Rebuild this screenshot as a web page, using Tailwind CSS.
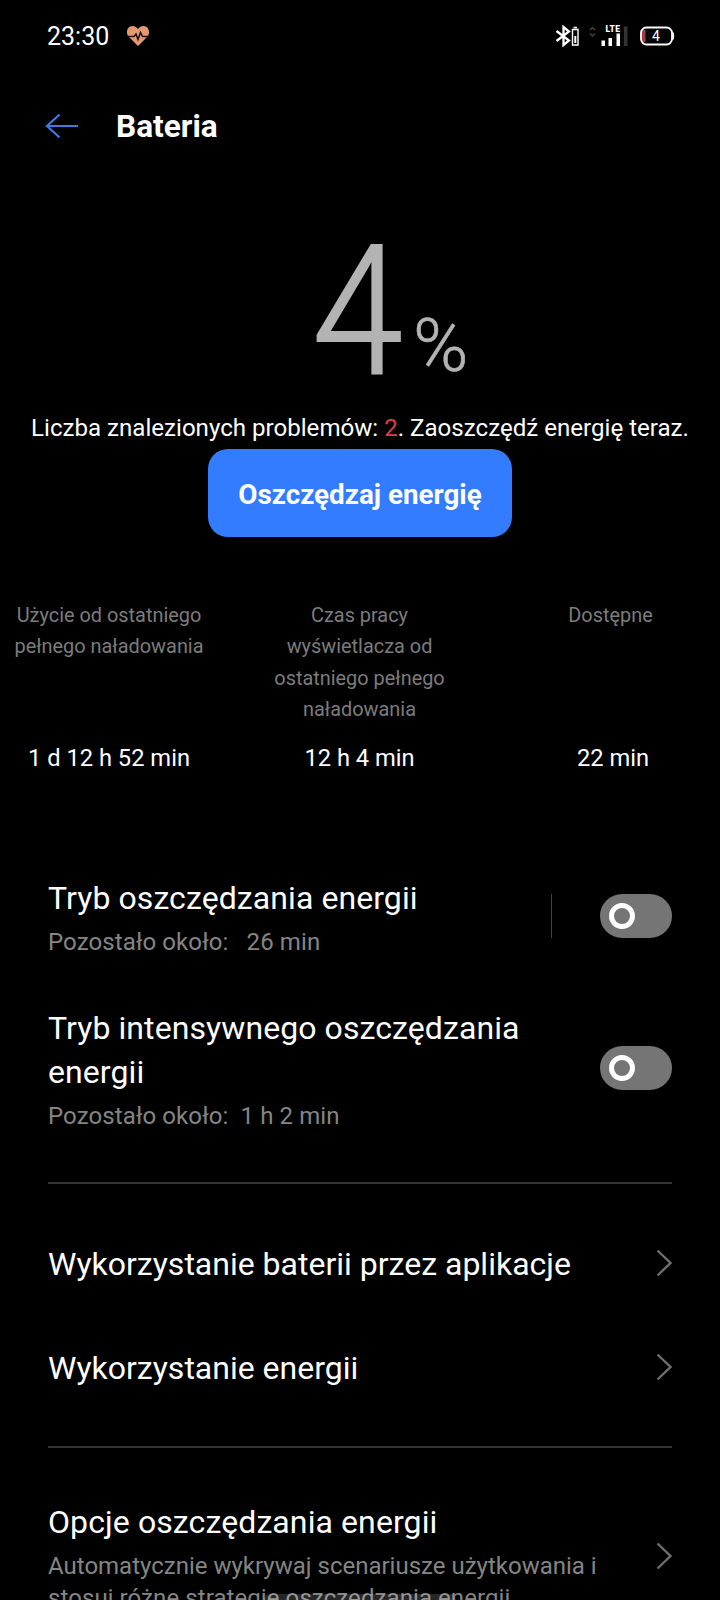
<!DOCTYPE html>
<html lang="pl">
<head>
    <meta charset="UTF-8">
    <title>Bateria</title>
    <script src="https://cdn.jsdelivr.net/npm/@tailwindcss/browser@4"></script>
</head>
<body class="bg-black text-white font-['Roboto',sans-serif]">
    <div class="relative w-[720px] h-[1600px] overflow-hidden">
        <!-- Status bar -->
        <header class="flex items-center h-[72px] pl-[47px] pr-[45px]">
            <span class="w-[79px] pt-[2px] text-[25px] leading-8">23:30</span>
            <svg class="w-[24px] h-[22px]" viewBox="0 0 24 22">
                <path d="M12 21 2.500 11.500C-1 7 2 1 6.500 1 9 1 11 2.500 12 4c1-1.500 3-3 5.500-3C22 1 25 7 21.500 11.500Z" fill="#e39a73"/>
                <path d="M0 11.500h8l2-2.500 2 5.500 2.500-7 2 4H24" fill="none" stroke="#1a0d08" stroke-width="1.500"/>
            </svg>
            <div class="ml-auto flex items-center">
                <svg class="w-[26px] h-[22px]" viewBox="0 0 26 22" fill="none" stroke="#fff">
                    <path d="m1.500 6 12.500 9.500L8.500 20V2L14 6.500 1.500 16" stroke-width="2.300"/>
                    <path d="M17.500 4.500h5.500v15.500h-5.500zM18.500 2.500h3.500" stroke-width="1.400"/>
                    <path d="M20.300 11v7" stroke-width="2"/>
                </svg>
                <svg class="ml-[8px] w-[7px] h-[22px]" viewBox="0 0 7 22" fill="none" stroke="#444" stroke-width="1.500">
                    <path d="m1 5 2.500-2.500L6 5M1 8.500l2.500 2.500L6 8.500"/>
                </svg>
                <svg class="ml-[5px] w-[27px] h-[22px]" viewBox="0 0 27 22">
                    <text x="4.500" y="7" font-family="Roboto" font-size="8.500" font-weight="900" textLength="14.500" fill="#fff">LTE</text>
                    <path d="M.5 15.500H4V21H.5zM7.500 13H11v8H7.500zM15.500 8.500h3.500V21h-3.500z" fill="#fff"/>
                    <path d="M23 1.500h3.500V21H23z" fill="#333"/>
                </svg>
                <svg class="ml-[12px] w-[35px] h-[20px]" viewBox="0 0 35 20">
                    <path d="M2 4h3.500v12H2z" fill="#a63a44"/>
                    <rect x="1" y="1.500" width="31" height="17" rx="5.500" fill="none" stroke="#fff" stroke-width="1.800"/>
                    <path d="M33 6.500q1.500 3.500 0 7z" fill="#fff" stroke="#fff"/>
                    <text x="16" y="14.800" font-family="Roboto" font-size="14" text-anchor="middle" fill="#fff">4</text>
                </svg>
            </div>
        </header>

        <!-- Title bar -->
        <div class="flex items-center h-[108px] pl-[45px]">
            <svg class="w-[34px] h-[26px]" viewBox="0 0 34 26" fill="none" stroke="#3a7bea" stroke-width="2.200">
                <path d="M14.500 1.500 2 13l12.500 11.500M2 13h31"/>
            </svg>
            <h1 class="ml-[37px] pt-[2px] text-[31.600px] leading-10 font-bold">Bateria</h1>
        </div>

        <!-- Charge level -->
        <div class="flex items-baseline h-[232px] pl-[312px] text-[#b3b3b3] font-light">
            <span class="w-[101px] text-[180px] leading-[264px] origin-left scale-x-[0.91] [-webkit-text-stroke:1.8px_#b3b3b3]">4</span>
            <span class="text-[75px] leading-none -translate-y-[2px] [-webkit-text-stroke:0.6px_#b3b3b3]">%</span>
        </div>

        <p class="text-center text-[24.1px] leading-[32px] whitespace-nowrap">Liczba znalezionych problemów: <span class="text-[#d6404f]">2</span>. Zaoszczędź energię teraz.</p>
        <button class="block mx-auto mt-[5px] w-[304px] h-[88px] pt-[3px] rounded-[20px] bg-[#337cff] text-[27.8px] font-bold whitespace-nowrap">Oszczędzaj energię</button>

        <!-- Usage stats -->
        <div class="mt-[63px] flex justify-between h-[174px] text-center">
            <div class="w-[218px] flex flex-col justify-between">
                <p class="text-[19.9px] leading-[31.4px] text-[#7c7c7c]">Użycie od ostatniego<br>pełnego naładowania</p>
                <p class="text-[23.7px] leading-8">1 d 12 h 52 min</p>
            </div>
            <div class="w-[218px] pr-[1px] flex flex-col justify-between">
                <p class="text-[19.9px] leading-[31.4px] text-[#7c7c7c]">Czas pracy<br>wyświetlacza od<br>ostatniego pełnego<br>naładowania</p>
                <p class="text-[23.7px] leading-8">12 h 4 min</p>
            </div>
            <div class="w-[218px] pr-[1px] flex flex-col justify-between">
                <p class="text-[19.9px] leading-[31.4px] text-[#7c7c7c]">Dostępne</p>
                <p class="pl-[5px] text-[23.7px] leading-8">22 min</p>
            </div>
        </div>

        <!-- Power modes -->
        <section class="mx-[48px] pt-[102px] pb-[50px] border-b-2 border-[#333]">
            <div class="flex items-center">
                <div class="flex-1">
                    <h2 class="text-[32px] leading-[44px] tracking-[0.08px]">Tryb oszczędzania energii</h2>
                    <p class="mt-[6px] text-[24px] leading-8 tracking-[0.1px] text-[#858585] whitespace-pre">Pozostało około:   26 min</p>
                </div>
                <div class="w-px h-[44px] mb-[3px] mr-[48px] bg-[#404040]"></div>
                <div class="flex items-center w-[72px] h-[44px] mb-[3px] pl-[9px] rounded-full bg-[#757575]">
                    <div class="size-[26px] rounded-full border-5 border-white"></div>
                </div>
            </div>
            <div class="mt-[49px] flex items-center">
                <div class="flex-1">
                    <h2 class="text-[32px] leading-[43.5px] tracking-[0.08px]">Tryb intensywnego oszczędzania<br>energii</h2>
                    <p class="mt-[6px] text-[24px] leading-8 tracking-[0.1px] text-[#858585] whitespace-pre">Pozostało około:  1 h 2 min</p>
                </div>
                <div class="flex items-center w-[72px] h-[44px] mb-[4px] pl-[9px] rounded-full bg-[#757575]">
                    <div class="size-[26px] rounded-full border-5 border-white"></div>
                </div>
            </div>
        </section>

        <!-- Usage links -->
        <section class="mx-[48px] pt-[58px] pb-[56px] border-b-2 border-[#333]">
            <div class="flex items-center justify-between">
                <h2 class="text-[32px] leading-[44px]">Wykorzystanie baterii przez aplikacje</h2>
                <svg class="w-[16px] h-[28px] mb-[2px]" viewBox="0 0 16 28" fill="none" stroke="#6e6e6e" stroke-width="2.400"><path d="m1.500 1.500 13 12.500-13 12.500"/></svg>
            </div>
            <div class="mt-[60px] flex items-center justify-between">
                <h2 class="text-[32px] leading-[44px]">Wykorzystanie energii</h2>
                <svg class="w-[16px] h-[28px] mb-[2px]" viewBox="0 0 16 28" fill="none" stroke="#6e6e6e" stroke-width="2.400"><path d="m1.500 1.500 13 12.500-13 12.500"/></svg>
            </div>
        </section>

        <section class="mx-[48px] pt-[52px] flex items-center justify-between">
            <div>
                <h2 class="text-[32px] leading-[44px] tracking-[0.1px]">Opcje oszczędzania energii</h2>
                <p class="mt-[6px] text-[24px] leading-[32px] text-[#858585]">Automatycznie wykrywaj scenariusze użytkowania i<br><span class="tracking-[0.08px]">stosuj różne strategie oszczędzania energii</span></p>
            </div>
            <svg class="w-[16px] h-[28px] mb-[2px]" viewBox="0 0 16 28" fill="none" stroke="#6e6e6e" stroke-width="2.400"><path d="m1.500 1.500 13 12.500-13 12.500"/></svg>
        </section>

        <!-- Gesture bar -->
        <div class="absolute bottom-0 left-[264px] w-[192px] h-[6px] rounded-t-full bg-white/15"></div>
    </div>
</body>
</html>
